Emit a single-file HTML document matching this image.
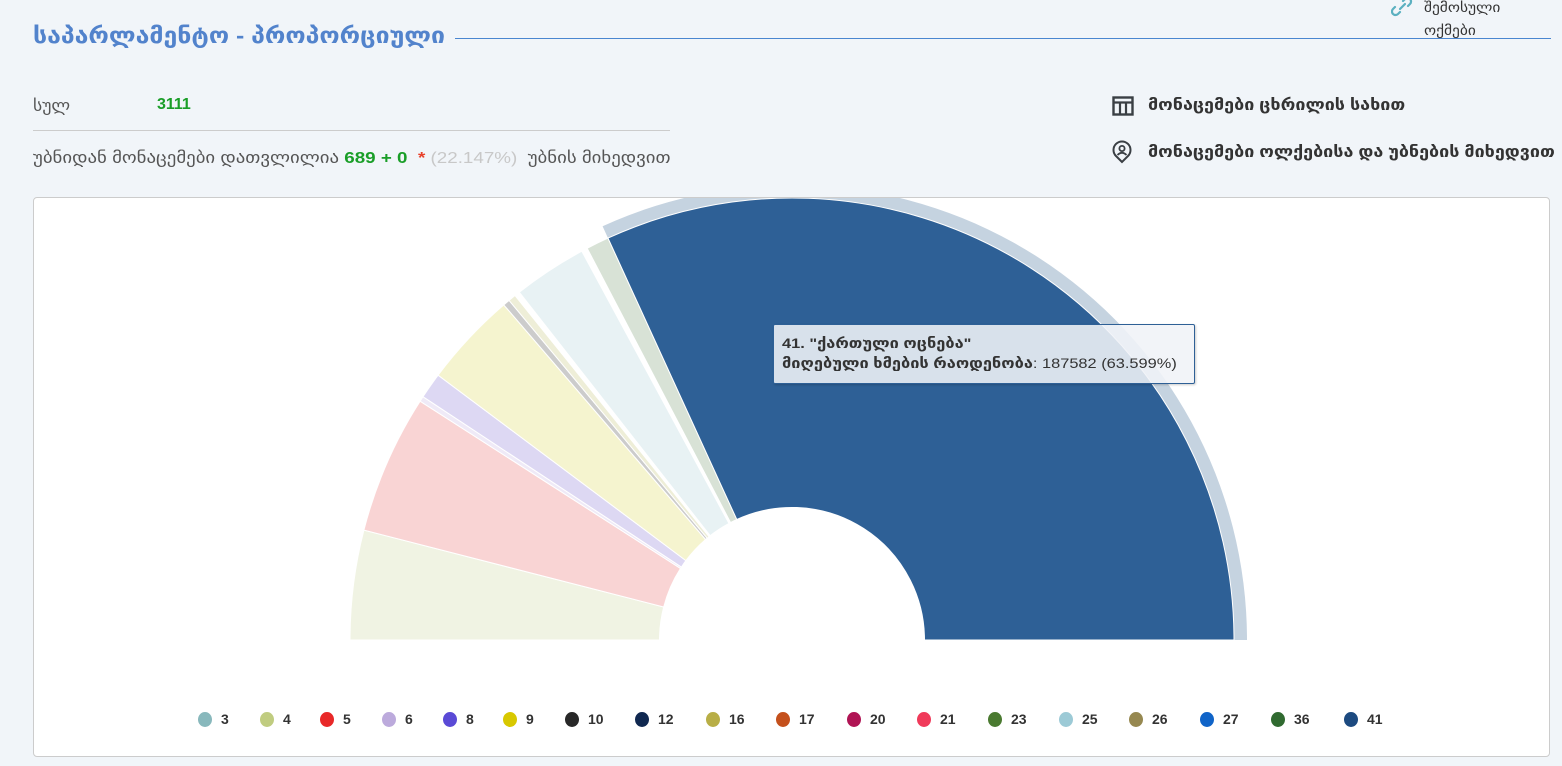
<!DOCTYPE html>
<html><head><meta charset="utf-8">
<style>
body{margin:0;width:1562px;height:766px;background:#f1f5f9;font-family:"Liberation Sans","DejaVu Sans",sans-serif;position:relative;overflow:hidden}
.a{position:absolute;white-space:nowrap}
.title{left:33px;top:23px;font-size:22px;font-weight:bold;color:#5283cc;transform:scaleX(1.13);transform-origin:left}
.rt{font-size:16px;font-weight:bold;color:#333;transform:scaleX(1.12);transform-origin:left}
.lg{position:absolute;top:711px;font-size:14px;font-weight:bold;color:#333;display:flex;align-items:center}
.lg i{display:inline-block;width:14px;height:15px;border-radius:50%;margin-right:9px}
</style></head><body>
<div class="a title">საპარლამენტო - პროპორციული</div>
<div class="a" style="left:455px;top:38px;width:1096px;height:1px;background:#4a86d0"></div>
<svg class="a" style="left:1391px;top:-3px" width="22" height="20" viewBox="0 0 22 20"><g fill="none" stroke="#5bb0c0" stroke-width="2.2" stroke-linecap="round"><path d="M9 12 L14 7"/><path d="M12 4 l2-2 a3.5 3.5 0 0 1 5 5 l-2 2"/><path d="M9 15 l-2 2 a3.5 3.5 0 0 1-5-5 l2-2"/></g></svg>
<div class="a" style="left:1424px;top:-4px;font-size:14px;color:#333;line-height:23px;transform:scaleX(1.1);transform-origin:left">შემოსული<br>ოქმები</div>

<div class="a" style="left:33px;top:96px;font-size:16px;color:#555;transform:scaleX(1.1);transform-origin:left">სულ</div>
<div class="a" style="left:157px;top:96px;font-size:16px;font-weight:bold;color:#1a9e28">3111</div>
<div class="a" style="left:33px;top:130px;width:637px;height:1px;background:#ccc"></div>
<div class="a" style="left:33px;top:148px;font-size:16px;color:#555;transform:scaleX(1.175);transform-origin:left">უბნიდან მონაცემები დათვლილია <b style="color:#1a9e28;font-weight:bold">689 + 0</b> &nbsp;<span style="color:#e8402a;font-weight:bold">*</span> <span style="color:#c8c8c8">(22.147%)</span> &nbsp;უბნის მიხედვით</div>

<svg class="a" style="left:1112px;top:96px" width="22" height="20" viewBox="0 0 22 20"><rect x="1.5" y="1.5" width="19" height="17" fill="none" stroke="#3a3f44" stroke-width="2.4"/><path d="M1.5 6.5h19M8 6.5v12M14 6.5v12" stroke="#3a3f44" stroke-width="2.2"/></svg>
<div class="a rt" style="left:1148px;top:95px">მონაცემები ცხრილის სახით</div>
<svg class="a" style="left:1112px;top:140px" width="20" height="24" viewBox="0 0 20 24"><path d="M10 22 L4 16 A8.5 8.5 0 1 1 16 16 Z" fill="none" stroke="#3a3f44" stroke-width="2"/><circle cx="10" cy="8.5" r="2.6" fill="none" stroke="#3a3f44" stroke-width="1.8"/><path d="M5.5 15 q4.5-4.5 9 0" fill="none" stroke="#3a3f44" stroke-width="1.8"/></svg>
<div class="a rt" style="left:1148px;top:142px">მონაცემები ოლქებისა და უბნების მიხედვით</div>

<div class="a" style="left:33px;top:197px;width:1515px;height:558px;background:#fff;border:1px solid #ccc;border-radius:4px"></div>
<svg class="a" style="left:0;top:0" width="1562" height="766">
<defs><clipPath id="c"><rect x="34" y="198" width="1514" height="557"/></clipPath></defs>
<g stroke="#fff" stroke-width="1" clip-path="url(#c)">
<path d="M602.6 226.3 A455 455 0 0 1 1247 640 L1234 640 A442 442 0 0 0 608 238.1 Z" fill="#c5d3e0" stroke="none"/>
<path d="M350 640 A442 442 0 0 1 363.9 530.1 L663.7 607 A132.5 132.5 0 0 0 659.5 640 Z" fill="#f0f3e3"/>
<path d="M363.9 530.1 A442 442 0 0 1 420.1 401.2 L680.5 568.4 A132.5 132.5 0 0 0 663.7 607 Z" fill="#f9d4d4"/>
<path d="M420.1 401.2 A442 442 0 0 1 423 396.7 L681.4 567.1 A132.5 132.5 0 0 0 680.5 568.4 Z" fill="#efeaf7"/>
<path d="M423 396.7 A442 442 0 0 1 438.1 375.2 L685.9 560.6 A132.5 132.5 0 0 0 681.4 567.1 Z" fill="#ddd8f3"/>
<path d="M438.1 375.2 A442 442 0 0 1 503.8 304.9 L705.6 539.5 A132.5 132.5 0 0 0 685.9 560.6 Z" fill="#f5f4cf"/>
<path d="M503.8 304.9 A442 442 0 0 1 509.1 300.4 L707.2 538.2 A132.5 132.5 0 0 0 705.6 539.5 Z" fill="#cccccc"/>
<path d="M509.1 300.4 A442 442 0 0 1 515 295.5 L709 536.7 A132.5 132.5 0 0 0 707.2 538.2 Z" fill="#eeeed8"/>
<path d="M519.3 292.2 A442 442 0 0 1 581.8 251.2 L729 523.5 A132.5 132.5 0 0 0 710.2 535.7 Z" fill="#e8f2f4"/>
<path d="M587.2 248.3 A442 442 0 0 1 608 238.1 L736.8 519.5 A132.5 132.5 0 0 0 730.6 522.6 Z" fill="#d8e2d6"/>
<path d="M608 238.1 A442 442 0 0 1 1234 640 L924.5 640 A132.5 132.5 0 0 0 736.8 519.5 Z" fill="#2e6096"/>
</g>
</svg>
<div class="a" style="left:773px;top:324px;width:420px;height:58px;background:rgba(240,243,247,0.88);border:1px solid #2e6096;border-radius:2px;box-shadow:1px 1px 2px rgba(0,0,0,.2)"></div>
<div class="a" style="left:782px;top:333px;font-size:14px;color:#333;line-height:20px;transform:scaleX(1.17);transform-origin:left"><b>41. "ქართული ოცნება"</b><br><b>მიღებული ხმების რაოდენობა</b>: 187582 (63.599%)</div>

<div class="lg" style="left:198px"><i style="background:#88b8bc"></i>3</div>
<div class="lg" style="left:260px"><i style="background:#c0cc80"></i>4</div>
<div class="lg" style="left:320px"><i style="background:#e82828"></i>5</div>
<div class="lg" style="left:382px"><i style="background:#bcaadc"></i>6</div>
<div class="lg" style="left:443px"><i style="background:#5a4ad6"></i>8</div>
<div class="lg" style="left:503px"><i style="background:#d8c800"></i>9</div>
<div class="lg" style="left:565px"><i style="background:#282828"></i>10</div>
<div class="lg" style="left:635px"><i style="background:#102850"></i>12</div>
<div class="lg" style="left:706px"><i style="background:#b8ae46"></i>16</div>
<div class="lg" style="left:776px"><i style="background:#c4501c"></i>17</div>
<div class="lg" style="left:847px"><i style="background:#b01454"></i>20</div>
<div class="lg" style="left:917px"><i style="background:#f03a5a"></i>21</div>
<div class="lg" style="left:988px"><i style="background:#4a7a30"></i>23</div>
<div class="lg" style="left:1059px"><i style="background:#9ccad6"></i>25</div>
<div class="lg" style="left:1129px"><i style="background:#968850"></i>26</div>
<div class="lg" style="left:1200px"><i style="background:#1064c8"></i>27</div>
<div class="lg" style="left:1271px"><i style="background:#306a30"></i>36</div>
<div class="lg" style="left:1344px"><i style="background:#1c4a80"></i>41</div>
</body></html>
